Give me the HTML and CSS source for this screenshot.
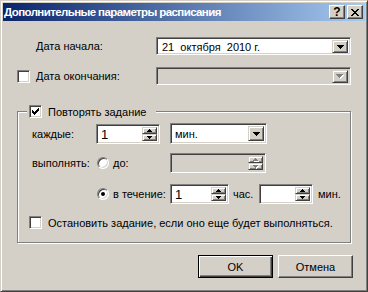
FILE: index.html
```html
<!DOCTYPE html>
<html lang="ru">
<head>
  <meta charset="UTF-8">
  <title>Дополнительные параметры расписания</title>
  <link rel="stylesheet" href="styles.css">
</head>
<body>
  <div class="dialog">
    <div class="titlebar">
      <span class="title">Дополнительные параметры расписания</span>
      <span class="cap-btn help">?</span>
      <span class="cap-btn close">
        <svg width="8" height="7" viewBox="0 0 8 7"><path d="M0 0h2v1H0zM6 0h2v1H6zM1 1h2v1H1zM5 1h2v1H5zM2 2h4v1H2zM3 3h2v1H3zM2 4h4v1H2zM1 5h2v1H1zM5 5h2v1H5zM0 6h2v1H0zM6 6h2v1H6z" fill="#000"/></svg>
      </span>
    </div>

    <div class="content">
      <!-- даты -->
      <div class="row date-row">
        <span class="date-label first">Дата начала:</span>
        <div class="combo date">
          <span class="combo-text">21  октября  2010 г.</span>
          <span class="drop"><svg width="7" height="4" viewBox="0 0 7 4"><path d="M0 0h7v1H0zM1 1h5v1H1zM2 2h3v1H2zM3 3h1v1H3z" fill="#000"/></svg></span>
        </div>
      </div>
      <div class="row date-row end">
        <span class="check"></span>
        <span class="date-label">Дата окончания:</span>
        <div class="combo date disabled">
          <span class="combo-text"></span>
          <span class="drop"><svg width="8" height="5" viewBox="0 0 8 5"><path d="M1 1h7v1H1zM2 2h5v1H2zM3 3h3v1H3zM4 4h1v1H4z" fill="#fff"/><path d="M0 0h7v1H0zM1 1h5v1H1zM2 2h3v1H2zM3 3h1v1H3z" fill="#808080"/></svg></span>
        </div>
      </div>

      <!-- повтор -->
      <div class="group">
        <div class="legend">
          <span class="check checked"><svg width="7" height="7" viewBox="0 0 7 7"><path d="M6 0h1v1H6zM5 1h2v1H5zM0 2h1v1H0zM4 2h3v1H4zM0 3h2v1H0zM3 3h3v1H3zM0 4h5v1H0zM1 5h3v1H1zM2 6h1v1H2z" fill="#000"/></svg></span>
          <span>Повторять задание</span>
        </div>

        <div class="row every-row">
          <span class="row-label">каждые:</span>
          <div class="spin every">
            <span class="spin-text">1</span>
            <span class="spin-btns">
              <span class="spin-btn"><svg width="5" height="3" viewBox="0 0 5 3"><path d="M2 0h1v1H2zM1 1h3v1H1zM0 2h5v1H0z" fill="#000"/></svg></span>
              <span class="spin-btn"><svg width="5" height="3" viewBox="0 0 5 3"><path d="M0 0h5v1H0zM1 1h3v1H1zM2 2h1v1H2z" fill="#000"/></svg></span>
            </span>
          </div>
          <div class="combo unit">
            <span class="combo-text">мин.</span>
            <span class="drop"><svg width="7" height="4" viewBox="0 0 7 4"><path d="M0 0h7v1H0zM1 1h5v1H1zM2 2h3v1H2zM3 3h1v1H3z" fill="#000"/></svg></span>
          </div>
        </div>

        <div class="row until-row">
          <span class="row-label">выполнять:</span>
          <span class="radio-wrap"><span class="radio"></span><span>до:</span></span>
          <div class="spin wide disabled">
            <span class="spin-text"></span>
            <span class="spin-btns">
              <span class="spin-btn"><svg width="6" height="4" viewBox="0 0 6 4"><path d="M3 1h1v1H3zM2 2h3v1H2zM1 3h5v1H1z" fill="#fff"/><path d="M2 0h1v1H2zM1 1h3v1H1zM0 2h5v1H0z" fill="#808080"/></svg></span>
              <span class="spin-btn"><svg width="6" height="4" viewBox="0 0 6 4"><path d="M1 1h5v1H1zM2 2h3v1H2zM3 3h1v1H3z" fill="#fff"/><path d="M0 0h5v1H0zM1 1h3v1H1zM2 2h1v1H2z" fill="#808080"/></svg></span>
            </span>
          </div>
        </div>

        <div class="row during-row">
          <span class="row-label"></span>
          <span class="radio-wrap"><span class="radio on"></span><span>в течение:</span></span>
          <div class="spin hours">
            <span class="spin-text">1</span>
            <span class="spin-btns">
              <span class="spin-btn"><svg width="5" height="3" viewBox="0 0 5 3"><path d="M2 0h1v1H2zM1 1h3v1H1zM0 2h5v1H0z" fill="#000"/></svg></span>
              <span class="spin-btn"><svg width="5" height="3" viewBox="0 0 5 3"><path d="M0 0h5v1H0zM1 1h3v1H1zM2 2h1v1H2z" fill="#000"/></svg></span>
            </span>
          </div>
          <span class="unit-label">час.</span>
          <div class="spin minutes">
            <span class="spin-text"></span>
            <span class="spin-btns">
              <span class="spin-btn"><svg width="5" height="3" viewBox="0 0 5 3"><path d="M2 0h1v1H2zM1 1h3v1H1zM0 2h5v1H0z" fill="#000"/></svg></span>
              <span class="spin-btn"><svg width="5" height="3" viewBox="0 0 5 3"><path d="M0 0h5v1H0zM1 1h3v1H1zM2 2h1v1H2z" fill="#000"/></svg></span>
            </span>
          </div>
          <span class="unit-label last">мин.</span>
        </div>

        <div class="row stop-row">
          <span class="check"></span>
          <span>Остановить задание, если оно еще будет выполняться.</span>
        </div>
      </div>

      <div class="buttons">
        <span class="btn default">OK</span>
        <span class="btn">Отмена</span>
      </div>
    </div>
  </div>
</body>
</html>
```

FILE: styles.css
```css
* {
  box-sizing: border-box;
}
body {
  margin: 0;
  background: #d4d0c8;
  font-family: "Liberation Sans", Arial, sans-serif;
  font-size: 11px;
  color: #000;
}
.dialog {
  width: 368px;
  height: 292px;
  background: #d4d0c8;
  border: 1px solid;
  border-color: #d4d0c8 #404040 #404040 #d4d0c8;
  box-shadow: inset 1px 1px #fff, inset -1px -1px #808080;
  padding: 2px;
}

/* заголовок */
.titlebar {
  height: 18px;
  display: flex;
  align-items: center;
  padding: 0 2px 0 1px;
  background: linear-gradient(to right, #0a246a, #a6caf0);
}
.title {
  flex: 1;
  color: #fff;
  font-weight: bold;
  font-size: 11.5px;
  letter-spacing: -0.6px;
  white-space: nowrap;
}
.cap-btn {
  width: 16px;
  height: 14px;
  margin-left: 2px;
  display: flex;
  align-items: center;
  justify-content: center;
  background: #d4d0c8;
  border: 1px solid;
  border-color: #fff #404040 #404040 #fff;
  box-shadow: inset -1px -1px #808080;
  font-weight: bold;
  font-size: 12px;
  line-height: 1;
}
.cap-btn.help {
  margin-left: 0;
}

.content {
  padding: 16px 14px 0;
}
.row {
  display: flex;
  align-items: center;
}

/* даты */
.date-row {
  height: 18px;
}
.date-row.end {
  margin-top: 12px;
}
.date-label {
  width: 120px;
  margin-left: 6px;
}
.date-label.first {
  margin-left: 19px;
}

/* поля */
.combo,
.spin {
  display: flex;
  background: #fff;
  border: 1px solid;
  border-color: #808080 #fff #fff #808080;
  box-shadow: inset 1px 1px #404040, inset -1px -1px #d4d0c8;
  padding: 2px;
}
.combo.disabled,
.spin.disabled {
  background: #d4d0c8;
}
.combo-text {
  flex: 1;
  padding-left: 2px;
  white-space: pre;
  align-self: center;
}
.combo.date {
  width: 195px;
  height: 18px;
  padding: 2px 2px 1px 2px;
}
.combo.date .combo-text {
  padding-left: 3px;
}
.combo.unit {
  width: 97px;
  height: 21px;
  margin-left: 10px;
}
.drop,
.spin-btn {
  display: flex;
  align-items: center;
  justify-content: center;
  background: #d4d0c8;
  border: 1px solid;
  border-color: #d4d0c8 #404040 #404040 #d4d0c8;
  box-shadow: inset 1px 1px #fff, inset -1px -1px #808080;
}
.drop {
  width: 16px;
}
.spin {
  height: 20px;
}
.spin-text {
  flex: 1;
  padding-left: 2px;
  font-size: 13px;
  line-height: 16px;
}
.spin-btns {
  width: 15px;
  display: flex;
  flex-direction: column;
}
.spin-btn {
  flex: 1;
}
.spin.every {
  width: 64px;
}
.spin.wide {
  width: 96px;
}
.spin.hours {
  width: 59px;
}
.spin.minutes {
  width: 54px;
}

/* флажки и переключатели */
.check {
  width: 13px;
  height: 13px;
  flex: none;
  display: flex;
  align-items: center;
  justify-content: center;
  background: #fff;
  border: 1px solid;
  border-color: #808080 #fff #fff #808080;
  box-shadow: inset 1px 1px #404040, inset -1px -1px #d4d0c8;
}
.radio {
  width: 12px;
  height: 12px;
  flex: none;
  display: flex;
  align-items: center;
  justify-content: center;
  border-radius: 50%;
  background: #fff;
  border: 1px solid;
  border-color: #808080 #fff #fff #808080;
  box-shadow: inset 1px 1px #404040, inset -1px -1px #d4d0c8;
}
.radio.on::after {
  content: "";
  width: 4px;
  height: 4px;
  border-radius: 50%;
  background: #000;
}
.radio-wrap {
  width: 73px;
  display: flex;
  align-items: center;
  gap: 4px;
}

/* группа */
.group {
  margin-top: 26px;
  border: 1px solid #808080;
  box-shadow: inset 1px 1px #fff, 1px 1px #fff;
  padding: 0 0 13px 11px;
}
.legend {
  display: flex;
  align-items: center;
  gap: 6px;
  width: max-content;
  height: 13px;
  margin: -7px 0 0 -2px;
  padding: 0 10px 0 2px;
  background: #d4d0c8;
}
.row-label {
  width: 67px;
  padding-left: 3px;
  flex: none;
}
.until-row .row-label,
.during-row .row-label {
  width: 68px;
}
.every-row {
  margin-top: 5px;
  height: 21px;
}
.until-row {
  margin-top: 9px;
  height: 20px;
}
.during-row {
  margin-top: 11px;
  height: 20px;
}
.unit-label {
  width: 30px;
  padding-left: 4px;
}
.unit-label.last {
  padding-left: 5px;
}
.stop-row {
  margin-top: 12px;
  height: 13px;
  gap: 6px;
}

/* кнопки */
.buttons {
  display: flex;
  justify-content: flex-end;
  gap: 5px;
  margin: 12px -2px 0 0;
}
.btn {
  width: 75px;
  height: 23px;
  display: flex;
  align-items: center;
  justify-content: center;
  background: #d4d0c8;
  border: 1px solid;
  border-color: #fff #404040 #404040 #fff;
  box-shadow: inset -1px -1px #808080;
}
.btn.default {
  border-color: #000;
  box-shadow: inset 1px 1px #fff, inset -1px -1px #404040, inset -2px -2px #808080;
}
```
